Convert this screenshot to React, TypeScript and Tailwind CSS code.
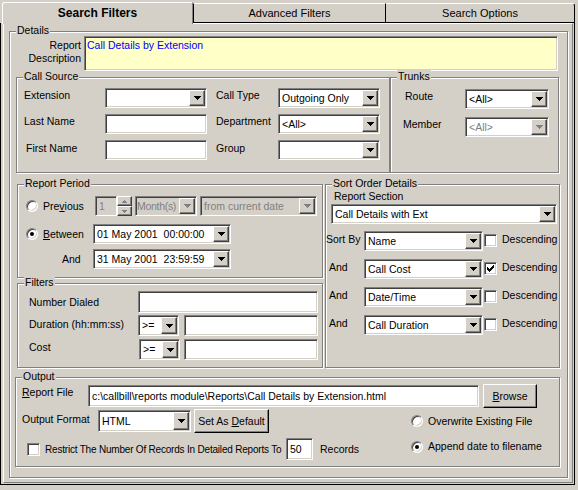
import type { ReactNode } from 'react';

const SUNKEN =
  'border border-t-[#808080] border-l-[#808080] border-b-white border-r-white shadow-[inset_1px_1px_0_#404040,inset_-1px_-1px_0_#d4d0c8]';
const RAISED =
  'border border-t-white border-l-white border-b-[#404040] border-r-[#404040] shadow-[inset_-1px_-1px_0_#808080]';

function Arrow({ disabled = false }: { disabled?: boolean }) {
  return (
    <svg width="7" height="4" viewBox="0 0 7 4" shapeRendering="crispEdges">
      <path d="M0 0h7v1H0zM1 1h5v1H1zM2 2h3v1H2zM3 3h1v1H3z" fill={disabled ? '#808080' : '#000'} />
    </svg>
  );
}

function Combo({
  value = '',
  className = '',
  textClass = 'pl-[3px]',
  disabled = false,
  grayBg = false,
}: {
  value?: string;
  className?: string;
  textClass?: string;
  disabled?: boolean;
  grayBg?: boolean;
}) {
  return (
    <div className={`${SUNKEN} flex shrink-0 ${grayBg ? 'bg-[#d4d0c8]' : 'bg-white'} ${className}`}>
      <div className={`min-w-0 flex-1 self-center overflow-hidden whitespace-pre ${textClass} ${disabled ? 'text-[#808080]' : ''}`}>
        {value}
      </div>
      <div className={`${RAISED} my-[1px] mr-[1px] flex w-[16px] shrink-0 items-center justify-center bg-[#d4d0c8]`}>
        <Arrow disabled={disabled} />
      </div>
    </div>
  );
}

function TextBox({ value = '', className = '' }: { value?: string; className?: string }) {
  return (
    <div className={`${SUNKEN} flex shrink-0 items-center overflow-hidden bg-white pl-[3px] ${className}`}>
      <span className="whitespace-nowrap">{value}</span>
    </div>
  );
}

function Radio({ checked = false }: { checked?: boolean }) {
  return (
    <div className="flex h-[12px] w-[12px] shrink-0 items-center justify-center rounded-full border border-t-[#808080] border-l-[#808080] border-b-white border-r-white bg-white shadow-[inset_1px_1px_0_#404040,inset_-1px_-1px_0_#d4d0c8]">
      {checked && <div className="h-[4px] w-[4px] rounded-full bg-black" />}
    </div>
  );
}

function Check({ checked = false, className = '' }: { checked?: boolean; className?: string }) {
  return (
    <div className={`${SUNKEN} flex h-[13px] w-[13px] shrink-0 items-center justify-center bg-white ${className}`}>
      {checked && (
        <svg width="7" height="7" viewBox="0 0 7 7" shapeRendering="crispEdges">
          <path d="M6 0h1v3H6zM5 1h1v3H5zM4 2h1v3H4zM3 3h1v3H3zM2 4h1v3H2zM1 3h1v3H1zM0 2h1v3H0z" fill="#000" />
        </svg>
      )}
    </div>
  );
}

function Button({ children, className = '' }: { children: ReactNode; className?: string }) {
  return (
    <div
      className={`flex shrink-0 items-center justify-center border border-t-white border-l-white border-b-black border-r-black bg-[#d4d0c8] shadow-[inset_-1px_-1px_0_#808080] ${className}`}
    >
      {children}
    </div>
  );
}

function Group({
  label,
  className = '',
  children,
}: {
  label: string;
  className?: string;
  children?: ReactNode;
}) {
  return (
    <div className={`relative shrink-0 border border-[#808080] shadow-[inset_1px_1px_0_#fff,1px_1px_0_#fff] ${className}`}>
      <span className="absolute -top-[8px] left-[6px] bg-[#d4d0c8] px-[1px] leading-[13px] whitespace-nowrap">
        {label}
      </span>
      {children}
    </div>
  );
}

function CallSourceRow({
  label,
  field,
  label2,
  field2,
  labelPad = 'pl-[7px]',
  labelTop = 'pt-[1px]',
}: {
  label: string;
  field: ReactNode;
  label2: string;
  field2: ReactNode;
  labelPad?: string;
  labelTop?: string;
}) {
  return (
    <div className="flex h-[20px]">
      <div className={`w-[88px] shrink-0 ${labelPad} ${labelTop}`}>{label}</div>
      {field}
      <div className={`ml-[9px] w-[62px] shrink-0 ${labelTop}`}>{label2}</div>
      {field2}
    </div>
  );
}

function SortRow({ label, value, checked = false, first = false }: { label: string; value: string; checked?: boolean; first?: boolean }) {
  return (
    <div className={`flex h-[20px] ${first ? 'mt-[7px]' : 'mt-[8px]'}`}>
      <div className={`w-[38px] shrink-0 pt-[2px] ${first ? '' : 'pl-[3px]'}`}>{label}</div>
      <Combo value={value} className="h-[20px] w-[119px]" />
      <Check checked={checked} className="mt-[3px] ml-[1px]" />
      <div className="ml-[5px] pt-[2px] whitespace-nowrap">Descending</div>
    </div>
  );
}

export default function App() {
  return (
    <div className="h-[490px] w-[578px] overflow-hidden bg-[#d4d0c8] text-[10.5px] leading-[13px] text-black font-['Liberation_Sans',Arial,sans-serif]">
      {/* tab strip */}
      <div className="flex h-[23px] pt-[2px]">
        <div className="relative z-10 ml-[2px] flex h-[22px] w-[191px] items-center justify-center rounded-tl-[3px] border-t border-l border-r border-t-white border-l-white border-r-[#808080] bg-[#d4d0c8] pb-[1px] text-[12px] font-bold">
          Search Filters
        </div>
        <div className="mt-[1px] flex h-[20px] w-[192px] items-center justify-center border-t border-l border-b border-t-white border-l-black border-b-black text-[11px]">
          Advanced Filters
        </div>
        <div className="mt-[1px] flex h-[20px] w-[190px] items-center justify-center rounded-tr-[3px] border border-t-white border-l-black border-r-black border-b-black text-[11px]">
          Search Options
        </div>
      </div>

      {/* tab page */}
      <div className="h-[462px] w-[575px] border-l border-r border-b border-black">
        <div className="ml-[2px] h-[460px] w-[570px] border border-t-white border-l-white border-r-[#808080] border-b-[#808080] pt-[7px] pl-[5px]">
          <Group label="Details" className="h-[447px] w-[559px]">
            {/* description */}
            <div className="mt-[4px] flex">
              <div className="w-[74px] shrink-0 pt-[3px] pr-[3px] text-right">
                Report
                <br />
                Description
              </div>
              <div className={`${SUNKEN} h-[35px] w-[474px] bg-[#ffffc8] pt-[2px] pl-[2px] text-[#0000ff]`}>
                Call Details by Extension
              </div>
            </div>

            {/* call source + trunks */}
            <div className="mt-[6px] ml-[6px] flex">
              <Group label="Call Source" className="h-[96px] w-[374px]">
                <div className="flex flex-col gap-[6px] pt-[10px]">
                  <CallSourceRow
                    label="Extension"
                    field={<Combo className="h-[20px] w-[102px]" />}
                    label2="Call Type"
                    field2={<Combo value="Outgoing Only" className="h-[20px] w-[102px]" />}
                  />
                  <CallSourceRow
                    label="Last Name"
                    field={<TextBox className="h-[20px] w-[102px]" />}
                    label2="Department"
                    field2={<Combo value="<All>" className="h-[20px] w-[102px]" />}
                  />
                  <CallSourceRow
                    label="First Name"
                    labelPad="pl-[9px]"
                    labelTop="pt-[2px]"
                    field={<TextBox className="h-[20px] w-[102px]" />}
                    label2="Group"
                    field2={<Combo className="h-[20px] w-[102px]" />}
                  />
                </div>
              </Group>
              <Group label="Trunks" className="h-[96px] w-[169px]">
                <div className="pt-[11px]">
                  <div className="flex h-[20px]">
                    <div className="w-[74px] shrink-0 pt-[1px] pl-[14px]">Route</div>
                    <Combo value="<All>" className="h-[20px] w-[84px]" />
                  </div>
                  <div className="mt-[8px] flex h-[20px]">
                    <div className="w-[74px] shrink-0 pt-[1px] pl-[12px]">Member</div>
                    <Combo value="<All>" disabled className="h-[20px] w-[84px]" />
                  </div>
                </div>
              </Group>
            </div>

            {/* period / filters / sort order */}
            <div className="mt-[11px] ml-[7px] flex">
              <div className="flex w-[306px] shrink-0 flex-col">
                <Group label="Report Period" className="h-[94px] w-[306px]">
                  <div className="mt-[11px] flex h-[20px] items-center">
                    <div className="ml-[8px]">
                      <Radio />
                    </div>
                    <div className="ml-[5px] w-[52px] shrink-0">
                      Pre<span className="underline">v</span>ious
                    </div>
                    <div className={`${SUNKEN} flex h-[20px] w-[22px] shrink-0 items-center bg-[#d4d0c8] pl-[3px] text-[#808080]`}>
                      1
                    </div>
                    <div className="flex h-[20px] w-[15px] shrink-0 flex-col">
                      <div className={`${RAISED} flex h-[10px] items-center justify-center bg-[#d4d0c8]`}>
                        <svg width="5" height="3" viewBox="0 0 5 3" shapeRendering="crispEdges">
                          <path d="M2 0h1v1H2zM1 1h3v1H1zM0 2h5v1H0z" fill="#808080" />
                        </svg>
                      </div>
                      <div className={`${RAISED} flex h-[10px] items-center justify-center bg-[#d4d0c8]`}>
                        <svg width="5" height="3" viewBox="0 0 5 3" shapeRendering="crispEdges">
                          <path d="M0 0h5v1H0zM1 1h3v1H1zM2 2h1v1H2z" fill="#808080" />
                        </svg>
                      </div>
                    </div>
                    <Combo
                      value="Month(s)"
                      disabled
                      grayBg
                      textClass="pl-[1px] tracking-[-0.3px]"
                      className="ml-[3px] h-[20px] w-[62px]"
                    />
                    <Combo value="from current date" disabled grayBg className="ml-[3px] h-[20px] w-[117px]" />
                  </div>
                  <div className="mt-[8px] flex h-[20px] items-center">
                    <div className="ml-[8px]">
                      <Radio checked />
                    </div>
                    <div className="ml-[5px] w-[50px] shrink-0">
                      <span className="underline">B</span>etween
                    </div>
                    <Combo value="01 May 2001  00:00:00" className="h-[20px] w-[138px]" />
                  </div>
                  <div className="mt-[5px] flex h-[20px] items-center">
                    <div className="w-[75px] shrink-0 pl-[44px]">And</div>
                    <Combo value="31 May 2001  23:59:59" className="h-[20px] w-[138px]" />
                  </div>
                </Group>
                <Group label="Filters" className="mt-[5px] h-[85px] w-[306px]">
                  <div className="mt-[7px] flex h-[22px] items-center">
                    <div className="w-[120px] shrink-0 pl-[11px]">Number Dialed</div>
                    <TextBox className="h-[22px] w-[180px]" />
                  </div>
                  <div className="mt-[2px] flex h-[21px]">
                    <div className="w-[120px] shrink-0 pt-[3px] pl-[11px] whitespace-nowrap">Duration (hh:mm:ss)</div>
                    <Combo value=">=" className="h-[21px] w-[41px]" />
                    <TextBox className="ml-[5px] h-[21px] w-[134px]" />
                  </div>
                  <div className="mt-[3px] flex h-[21px]">
                    <div className="w-[121px] shrink-0 pt-[2px] pl-[11px]">Cost</div>
                    <Combo value=">=" className="h-[21px] w-[41px]" />
                    <TextBox className="ml-[4px] h-[21px] w-[134px]" />
                  </div>
                </Group>
              </div>

              <Group label="Sort Order Details" className="ml-[2px] h-[184px] w-[235px]">
                <div className="pt-[5px] pl-[8px]">Report Section</div>
                <Combo value="Call Details with Ext" className="mt-[1px] ml-[5px] h-[20px] w-[226px]" />
                <SortRow first label="Sort By" value="Name" />
                <SortRow label="And" value="Call Cost" checked />
                <SortRow label="And" value="Date/Time" />
                <SortRow label="And" value="Call Duration" />
              </Group>
            </div>

            {/* output */}
            <Group label="Output" className="mt-[9px] ml-[5px] h-[90px] w-[545px]">
              <div className="mt-[6px] flex h-[24px]">
                <div className="w-[72px] shrink-0 pt-[2px] pl-[6px]">
                  <span className="underline">R</span>eport File
                </div>
                <TextBox
                  value="c:\callbill\reports module\Reports\Call Details by Extension.html"
                  className="mt-[1px] h-[22px] w-[391px]"
                />
                <Button className="ml-[4px] h-[24px] w-[54px]">
                  <span>
                    <span className="underline">B</span>rowse
                  </span>
                </Button>
              </div>
              <div className="mt-[1px] flex h-[24px]">
                <div className="w-[82px] shrink-0 pt-[4px] pl-[6px] whitespace-nowrap">Output Format</div>
                <Combo value="HTML" className="mt-[1px] h-[22px] w-[93px]" />
                <Button className="ml-[3px] h-[24px] w-[75px]">
                  <span className="whitespace-nowrap">
                    Set As <span className="underline">D</span>efault
                  </span>
                </Button>
                <div className="ml-[142px] flex items-center">
                  <Radio />
                  <span className="ml-[5px] whitespace-nowrap">Overwrite Existing File</span>
                </div>
              </div>
              <div className="mt-[5px] flex h-[22px] items-center">
                <Check className="ml-[11px]" />
                <div className="ml-[5px] w-[241px] shrink-0 overflow-hidden whitespace-nowrap text-[10px] tracking-[-0.2px]">
                  Restrict The Number Of Records In Detailed Reports To
                </div>
                <TextBox value="50" className="h-[22px] w-[27px]" />
                <div className="ml-[7px] w-[91px] shrink-0">Records</div>
                <div className="-mt-[5px] flex items-center">
                  <Radio checked />
                  <span className="ml-[5px] whitespace-nowrap">Append date to filename</span>
                </div>
              </div>
            </Group>
          </Group>
        </div>
      </div>
    </div>
  );
}
